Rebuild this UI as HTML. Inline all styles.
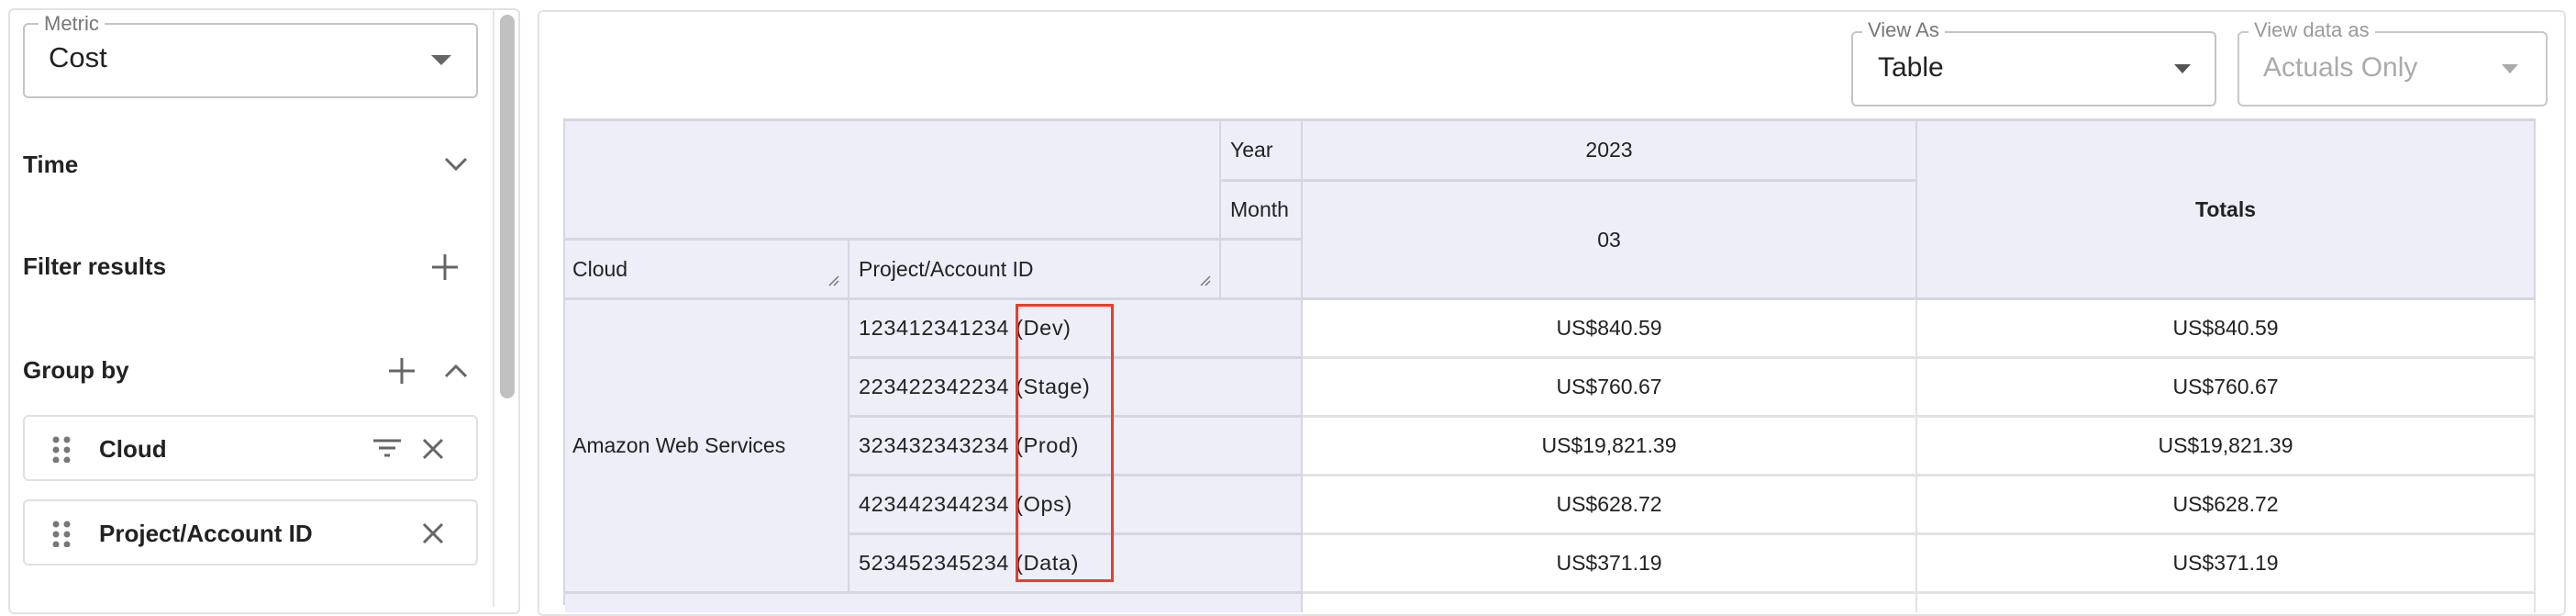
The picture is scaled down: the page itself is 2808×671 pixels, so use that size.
<!DOCTYPE html><html><head><style>
body{margin:0;width:2808px;height:652px;background:#fff;overflow:hidden;font-family:"Liberation Sans",sans-serif;color:#222;position:relative}
.a{position:absolute;box-sizing:border-box}
.lbl{font-size:22px;color:#777;background:#fff;padding:0 6px}
.h{font-weight:bold;font-size:26px;color:#222}
.c{position:absolute;box-sizing:border-box;background:#eeeef8;border-right:2px solid #d6d6e0;border-bottom:3px solid #d6d6e0;font-size:23px;color:#222;display:flex;align-items:center}
.p{font-size:23.5px;letter-spacing:0.6px}
.w{background:#fff;justify-content:center;border-right:2px solid #e2e2e2;border-bottom:3px solid #e2e2e2}
.ctr{justify-content:center}
</style></head><body>
<!-- left panel -->
<div class="a" style="left:9px;top:9px;width:558px;height:660px;border:2px solid #e2e2e2;border-radius:6px"></div>
<div class="a" style="left:537px;top:11px;width:2px;height:650px;background:#e6e6e6"></div>
<div class="a" style="left:545px;top:16px;width:16px;height:418px;background:#c1c1c1;border-radius:8px"></div>
<div class="a" style="left:25px;top:25px;width:496px;height:82px;border:2px solid #c4c4c4;border-radius:6px"></div>
<div class="a lbl" style="left:42px;top:13px">Metric</div>
<div class="a" style="left:53px;top:45px;font-size:31px;color:#222">Cost</div>
<svg class="a" style="left:470px;top:60px" width="22" height="12"><path d="M0 0H22L11 11Z" fill="#666"/></svg>
<div class="a h" style="left:25px;top:164px">Time</div>
<svg class="a" style="left:484px;top:171px" width="26" height="16"><path d="M2 2L13 13L24 2" stroke="#666" stroke-width="3" fill="none"/></svg>
<div class="a h" style="left:25px;top:275px">Filter results</div>
<svg class="a" style="left:470px;top:276px" width="30" height="30"><path d="M15 1V29M1 15H29" stroke="#666" stroke-width="3"/></svg>
<div class="a h" style="left:25px;top:388px">Group by</div>
<svg class="a" style="left:423px;top:389px" width="30" height="30"><path d="M15 1V29M1 15H29" stroke="#666" stroke-width="3"/></svg>
<svg class="a" style="left:484px;top:396px" width="26" height="16"><path d="M2 14L13 3L24 14" stroke="#666" stroke-width="3" fill="none"/></svg>
<div class="a" style="left:25px;top:452px;width:496px;height:72px;border:2px solid #e0e0e0;border-radius:6px"></div>
<div class="a" style="left:25px;top:544px;width:496px;height:72px;border:2px solid #e0e0e0;border-radius:6px"></div>
<svg class="a" style="left:56px;top:474px" width="24" height="30"><g fill="#777"><circle cx="5" cy="5" r="3.5"/><circle cx="17" cy="5" r="3.5"/><circle cx="5" cy="16" r="3.5"/><circle cx="17" cy="16" r="3.5"/><circle cx="5" cy="27" r="3.5"/><circle cx="17" cy="27" r="3.5"/></g></svg>
<svg class="a" style="left:56px;top:566px" width="24" height="30"><g fill="#777"><circle cx="5" cy="5" r="3.5"/><circle cx="17" cy="5" r="3.5"/><circle cx="5" cy="16" r="3.5"/><circle cx="17" cy="16" r="3.5"/><circle cx="5" cy="27" r="3.5"/><circle cx="17" cy="27" r="3.5"/></g></svg>
<div class="a h" style="left:108px;top:474px">Cloud</div>
<div class="a h" style="left:108px;top:566px">Project/Account ID</div>
<svg class="a" style="left:406px;top:478px" width="32" height="22"><path d="M1 2H31M7 10H25M13 18H19" stroke="#666" stroke-width="3"/></svg>
<svg class="a" style="left:460px;top:477px" width="24" height="24"><path d="M2 2L22 22M22 2L2 22" stroke="#666" stroke-width="3"/></svg>
<svg class="a" style="left:460px;top:569px" width="24" height="24"><path d="M2 2L22 22M22 2L2 22" stroke="#666" stroke-width="3"/></svg>
<!-- right panel -->
<div class="a" style="left:586px;top:11px;width:2211px;height:660px;border:2px solid #e2e2e2;border-radius:6px"></div>
<div class="a" style="left:2018px;top:34px;width:398px;height:82px;border:2px solid #c4c4c4;border-radius:6px"></div>
<div class="a lbl" style="left:2030px;top:20px">View As</div>
<div class="a" style="left:2047px;top:57px;font-size:30px;color:#222">Table</div>
<svg class="a" style="left:2370px;top:70px" width="18" height="11"><path d="M0 0H18L9 10Z" fill="#555"/></svg>
<div class="a" style="left:2439px;top:34px;width:338px;height:82px;border:2px solid #c8c8c8;border-radius:6px"></div>
<div class="a lbl" style="left:2451px;top:20px;color:#999">View data as</div>
<div class="a" style="left:2467px;top:57px;font-size:30px;color:#aaa">Actuals Only</div>
<svg class="a" style="left:2727px;top:70px" width="18" height="11"><path d="M0 0H18L9 10Z" fill="#aaa"/></svg>
<!-- table -->
<div class="a" style="left:614px;top:129px;width:2150px;height:3px;background:#d6d6e0"></div>
<div class="a" style="left:614px;top:129px;width:2px;height:530px;background:#d6d6e0"></div>
<div class="c" style="left:616px;top:132px;width:715px;height:130px"></div>
<div class="c" style="left:1331px;top:132px;width:89px;height:66px;padding-left:10px">Year</div>
<div class="c" style="left:1331px;top:198px;width:89px;height:64px;padding-left:10px">Month</div>
<div class="c" style="left:1331px;top:262px;width:89px;height:65px"></div>
<div class="c ctr" style="left:1420px;top:132px;width:670px;height:66px">2023</div>
<div class="c ctr" style="left:1420px;top:198px;width:670px;height:129px">03</div>
<div class="c ctr" style="left:2090px;top:132px;width:674px;height:195px;font-weight:bold">Totals</div>
<div class="c" style="left:616px;top:262px;width:310px;height:65px;padding-left:8px">Cloud</div>
<div class="c" style="left:926px;top:262px;width:405px;height:65px;padding-left:10px">Project/Account ID</div>
<svg class="a" style="left:903px;top:300px" width="12" height="12"><path d="M1 11L11 1M6 11L11 6" stroke="#777" stroke-width="1.5"/></svg>
<svg class="a" style="left:1308px;top:300px" width="12" height="12"><path d="M1 11L11 1M6 11L11 6" stroke="#777" stroke-width="1.5"/></svg>
<div class="c" style="left:616px;top:327px;width:310px;height:320px;padding-left:8px">Amazon Web Services</div>
<div class="c p" style="left:926px;top:327px;width:494px;height:64px;padding-left:10px">123412341234 (Dev)</div>
<div class="c p" style="left:926px;top:391px;width:494px;height:64px;padding-left:10px">223422342234 (Stage)</div>
<div class="c p" style="left:926px;top:455px;width:494px;height:64px;padding-left:10px">323432343234 (Prod)</div>
<div class="c p" style="left:926px;top:519px;width:494px;height:64px;padding-left:10px">423442344234 (Ops)</div>
<div class="c p" style="left:926px;top:583px;width:494px;height:64px;padding-left:10px">523452345234 (Data)</div>
<div class="c w" style="left:1420px;top:327px;width:670px;height:64px">US$840.59</div>
<div class="c w" style="left:2090px;top:327px;width:674px;height:64px">US$840.59</div>
<div class="c w" style="left:1420px;top:391px;width:670px;height:64px">US$760.67</div>
<div class="c w" style="left:2090px;top:391px;width:674px;height:64px">US$760.67</div>
<div class="c w" style="left:1420px;top:455px;width:670px;height:64px">US$19,821.39</div>
<div class="c w" style="left:2090px;top:455px;width:674px;height:64px">US$19,821.39</div>
<div class="c w" style="left:1420px;top:519px;width:670px;height:64px">US$628.72</div>
<div class="c w" style="left:2090px;top:519px;width:674px;height:64px">US$628.72</div>
<div class="c w" style="left:1420px;top:583px;width:670px;height:64px">US$371.19</div>
<div class="c w" style="left:2090px;top:583px;width:674px;height:64px">US$371.19</div>
<div class="c" style="left:616px;top:647px;width:804px;height:20px;border-bottom:0"></div>
<div class="c w" style="left:1420px;top:647px;width:670px;height:20px;border-bottom:0"></div>
<div class="c w" style="left:2090px;top:647px;width:674px;height:20px;border-bottom:0"></div>
<div class="a" style="left:1107px;top:331px;width:107px;height:303px;border:3px solid #f03a2a"></div>
</body></html>
